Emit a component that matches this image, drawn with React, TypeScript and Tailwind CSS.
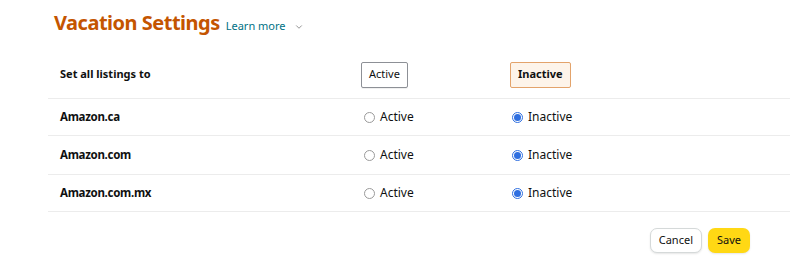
import { ChevronDown } from "lucide-react";

const markets = [
  { name: "Amazon.ca", h: "h-[37px]" },
  { name: "Amazon.com", h: "h-[39px]" },
  { name: "Amazon.com.mx", h: "h-[37px]" },
];

function Radio({ checked, label }: { checked?: boolean; label: string }) {
  return (
    <label className="flex items-center gap-[5px] text-[12px] text-[#0f1111]">
      <span
        className={
          checked
            ? "w-[11px] h-[11px] rounded-full border border-[#2f6fe0] bg-white flex items-center justify-center"
            : "w-[11px] h-[11px] rounded-full border border-[#9a9a9a] bg-white"
        }
      >
        {checked && <span className="w-[7px] h-[7px] rounded-full bg-[#2f6fe0]" />}
      </span>
      {label}
    </label>
  );
}

export default function App() {
  return (
    <div className="w-[797px] h-[271px] bg-white font-['Noto_Sans',sans-serif] text-[#0f1111]">
      <div className="flex items-baseline pl-[54px] pt-[8px] h-[50px]">
        <h1 className="text-[20px] font-bold text-[#c45500] tracking-[-0.5px]">Vacation Settings</h1>
        <a className="ml-[6px] text-[11px] text-[#007185] flex items-center gap-[8px]">
          Learn more
          <ChevronDown className="w-[10px] h-[10px] text-[#555] relative top-[1px]" strokeWidth={1.5} />
        </a>
      </div>

      <div className="ml-[48px] mr-[7px]">
        <div className="flex items-center h-[49px] border-b border-[#ececec]">
          <div className="w-[313px] pl-[12px] text-[11px] font-bold">Set all listings to</div>
          <div className="w-[149px]">
            <button className="h-[26px] px-[7px] text-[11px] border border-[#8d9096] rounded-[2px] bg-white shadow-[0_1px_0_rgba(0,0,0,0.06)]">
              Active
            </button>
          </div>
          <div>
            <button className="h-[26px] px-[7px] text-[11px] font-bold border border-[#e3a36b] rounded-[2px] bg-[#fdf4ea]">
              Inactive
            </button>
          </div>
        </div>
        {markets.map((m) => (
          <div key={m.name} className={`flex items-center ${m.h} border-b border-[#ececec]`}>
            <div className="w-[313px] pl-[12px] text-[11.5px] font-bold tracking-[-0.3px]">{m.name}</div>
            <div className="w-[149px] pl-[3px]">
              <Radio label="Active" />
            </div>
            <div className="pl-[2px]">
              <Radio checked label="Inactive" />
            </div>
          </div>
        ))}
      </div>

      <div className="flex justify-end gap-[6px] pr-[47px] pt-[16px]">
        <button className="h-[25px] px-[8px] text-[11px] border border-[#d5d9d9] rounded-[7px] bg-white shadow-[0_1px_2px_rgba(0,0,0,0.1)]">
          Cancel
        </button>
        <button className="h-[25px] px-[9px] text-[11px] rounded-[7px] bg-[#ffd814] shadow-[0_1px_2px_rgba(0,0,0,0.1)]">
          Save
        </button>
      </div>
    </div>
  );
}
